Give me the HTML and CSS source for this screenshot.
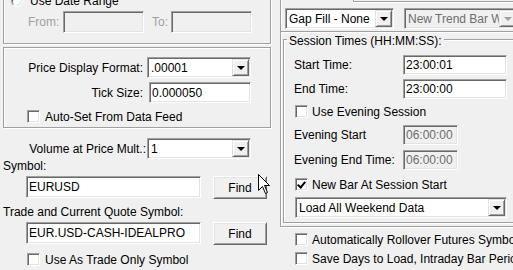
FILE: index.html
```html
<!DOCTYPE html>
<html lang="en">
<head>
    <meta charset="UTF-8">
    <meta name="viewport" content="width=device-width, initial-scale=1.0">
    <title>Chart Settings</title>
    <link rel="stylesheet" href="styles.css">
</head>
<body>
    <div class="dialog">
        <div class="col-left">
            <div class="group group-date">
                <label class="opt-row"><span class="radio"></span>Use Date Range</label>
                <div class="date-row">
                    <span class="dim lbl-from">From:</span>
                    <span class="field disabled date-field"></span>
                    <span class="dim lbl-to">To:</span>
                    <span class="field disabled date-field"></span>
                </div>
            </div>
            <div class="group group-price">
                <div class="form-row fmt-row">
                    <span class="row-label">Price Display Format:</span>
                    <span class="combo fmt-combo"><span class="combo-text">.00001</span><span class="combo-btn"></span></span>
                </div>
                <div class="form-row tick-row">
                    <span class="row-label">Tick Size:</span>
                    <span class="field tick-field">0.000050</span>
                </div>
                <label class="opt-row auto-row"><span class="check"></span>Auto-Set From Data Feed</label>
            </div>
            <div class="form-row vap-row">
                <span class="row-label">Volume at Price Mult.:</span>
                <span class="combo fmt-combo"><span class="combo-text">1</span><span class="combo-btn"></span></span>
            </div>
            <div class="caption symbol-caption">Symbol:</div>
            <div class="symbol-row">
                <span class="field symbol-field">EURUSD</span>
                <span class="button">Find</span>
            </div>
            <div class="caption trade-caption">Trade and Current Quote Symbol:</div>
            <div class="symbol-row">
                <span class="field symbol-field">EUR.USD-CASH-IDEALPRO</span>
                <span class="button">Find</span>
            </div>
            <label class="opt-row trade-only-row"><span class="check"></span>Use As Trade Only Symbol</label>
        </div>

        <div class="col-right">
            <div class="group group-chart">
                <div class="top-box"></div>
                <div class="gap-row">
                    <span class="combo gap-combo"><span class="combo-text">Gap Fill - None</span><span class="combo-btn"></span></span>
                    <span class="combo disabled trend-combo"><span class="combo-text">New Trend Bar When Exceeded</span><span class="combo-btn"></span></span>
                </div>
                <div class="separator"></div>
                <div class="group group-session">
                    <span class="legend">Session Times (HH:MM:SS):</span>
                    <div class="time-row start-row">
                        <span class="time-label">Start Time:</span>
                        <span class="field time-field">23:00:01</span>
                    </div>
                    <div class="time-row">
                        <span class="time-label">End Time:</span>
                        <span class="field time-field">23:00:00</span>
                    </div>
                    <label class="opt-row evening-row"><span class="check"></span>Use Evening Session</label>
                    <div class="time-row evening-start-row">
                        <span class="time-label">Evening Start</span>
                        <span class="field disabled short-field">06:00:00</span>
                    </div>
                    <div class="time-row evening-end-row">
                        <span class="time-label">Evening End Time:</span>
                        <span class="field disabled short-field">06:00:00</span>
                    </div>
                    <label class="opt-row newbar-row"><span class="check checked"></span>New Bar At Session Start</label>
                    <span class="combo weekend-combo"><span class="combo-text">Load All Weekend Data</span><span class="combo-btn"></span></span>
                </div>
            </div>
            <label class="opt-row rollover-row"><span class="check"></span>Automatically Rollover Futures Symbol</label>
            <label class="opt-row save-row"><span class="check"></span>Save Days to Load, Intraday Bar Period</label>
        </div>
    </div>

    <svg class="cursor" width="13" height="21" viewBox="0 0 13 21">
        <polygon points="0.5,0.5 0.5,16.5 4.5,12.5 7.5,19.5 9.5,18.5 6.5,11.5 11.5,11.5" fill="#fff" stroke="#000" stroke-width="1"/>
    </svg>
</body>
</html>
```

FILE: styles.css
```css
html, body {
    margin: 0;
    height: 100%;
    overflow: hidden;
    background: #f0f0f0;
}
body {
    font-family: "Liberation Sans", Arial, sans-serif;
    font-size: 12px;
    line-height: 14px;
    color: #000;
    position: relative;
}
.dialog {
    display: flex;
    margin-top: -14px;
}
.col-left {
    width: 268px;
    flex: none;
    padding-left: 3px;
}
.col-right {
    width: 260px;
    flex: none;
    margin-left: 9px;
}

/* group boxes - etched frame */
.group {
    border: 1px solid #a0a0a0;
    box-shadow: inset 1px 1px #fff, 1px 1px #fff;
}
.group-date {
    padding: 6px 0 10px 0;
}
.group-price {
    margin-top: 3px;
    padding: 9px 0 3px 0;
}

/* common controls */
.field, .combo {
    box-sizing: border-box;
    display: flex;
    align-items: center;
    background: #fff;
    border: 1px solid;
    border-color: #a0a0a0 #fff #fff #a0a0a0;
    box-shadow: inset 1px 1px #696969, inset -1px -1px #e3e3e3;
    white-space: nowrap;
    overflow: hidden;
}
.field {
    padding-left: 2px;
}
.field.disabled, .combo.disabled {
    background: #f0f0f0;
    color: #6d6d6d;
}
.combo-text {
    flex: 1;
    padding-left: 3px;
    overflow: hidden;
}
.combo-btn {
    flex: none;
    box-sizing: border-box;
    width: 17px;
    height: 17px;
    margin-right: 1px;
    background: #f0f0f0;
    border: 1px solid;
    border-color: #e3e3e3 #696969 #696969 #e3e3e3;
    box-shadow: inset 1px 1px #fff, inset -1px -1px #a0a0a0;
    display: flex;
    align-items: center;
    justify-content: center;
}
.combo-btn::after {
    content: "";
    border-left: 4px solid transparent;
    border-right: 4px solid transparent;
    border-top: 4px solid #000;
    margin-top: 1px;
}
.combo.disabled .combo-btn::after {
    border-top-color: #a0a0a0;
}
.button {
    box-sizing: border-box;
    display: flex;
    align-items: center;
    justify-content: center;
    width: 54px;
    height: 23px;
    background: #f0f0f0;
    border: 1px solid;
    border-color: #fff #696969 #696969 #fff;
    box-shadow: inset 1px 1px #e3e3e3, inset -1px -1px #a0a0a0;
}
.check {
    box-sizing: border-box;
    width: 13px;
    height: 13px;
    flex: none;
    background: #fff;
    border: 1px solid;
    border-color: #a0a0a0 #fff #fff #a0a0a0;
    box-shadow: inset 1px 1px #696969, inset -1px -1px #e3e3e3;
    position: relative;
}
.check.checked::after {
    content: "";
    position: absolute;
    left: 3px;
    top: 1px;
    width: 3px;
    height: 6px;
    border: solid #000;
    border-width: 0 2px 2px 0;
    transform: rotate(40deg);
}
.radio {
    box-sizing: border-box;
    width: 12px;
    height: 12px;
    flex: none;
    border-radius: 50%;
    background: #fff;
    border: 1px solid;
    border-color: #a0a0a0 #fff #fff #a0a0a0;
    box-shadow: inset 1px 1px #696969, inset -1px -1px #e3e3e3;
    margin: 0 7px 0 7px;
}
.opt-row {
    display: flex;
    align-items: center;
    height: 15px;
    white-space: nowrap;
}
.opt-row .check {
    margin-right: 5px;
}
.dim {
    color: #a0a0a0;
}

/* left column */
.date-row {
    display: flex;
    align-items: center;
    margin-top: 3px;
    padding-left: 24px;
}
.date-field {
    width: 81px;
    height: 22px;
}
.lbl-from {
    width: 35px;
}
.lbl-to {
    margin-left: 8px;
    width: 19px;
}
.form-row {
    display: flex;
    align-items: center;
}
.row-label {
    width: 139px;
    text-align: right;
    flex: none;
}
.fmt-combo {
    margin-left: 4px;
    width: 104px;
    height: 21px;
}
.tick-row {
    margin-top: 4px;
}
.tick-field {
    margin-left: 6px;
    width: 102px;
    height: 21px;
}
.auto-row {
    margin-top: 6px;
    padding-left: 23px;
}
.vap-row {
    margin-top: 10px;
}
.vap-row .row-label {
    width: 143px;
}
.vap-row .fmt-combo {
    margin-left: 1px;
}
.caption {
    height: 15px;
}
.trade-caption {
    margin-top: 6px;
}
.symbol-row {
    display: flex;
    align-items: flex-start;
    margin-top: 2px;
    padding-left: 23px;
}
.symbol-field {
    width: 175px;
    height: 22px;
}
.symbol-row .button {
    margin-left: 12px;
}
.trade-only-row {
    margin-top: 7px;
    padding-left: 24px;
}

/* right column */
.group-chart {
    padding: 0 0 3px 0;
    border-right: none;
}
.top-box {
    box-sizing: border-box;
    height: 15px;
    margin-left: 72px;
    border: 1px solid #a0a0a0;
    border-top: none;
    border-right: none;
    box-shadow: inset 1px 0 #fff, 0 1px #fff;
}
.gap-row {
    display: flex;
    padding: 6px 0 0 4px;
}
.gap-combo {
    width: 109px;
    height: 21px;
}
.trend-combo {
    margin-left: 10px;
    width: 114px;
    height: 21px;
}
.separator {
    margin-top: 2px;
    border-top: 1px solid #a0a0a0;
    border-bottom: 1px solid #fff;
}
.group-session {
    margin: 6px 0 0 2px;
    width: 240px;
    padding: 0 0 4px 0;
}
.legend {
    display: block;
    width: max-content;
    margin: -6px 0 0 3px;
    padding: 0 2px;
    background: #f0f0f0;
}
.time-row {
    display: flex;
    align-items: center;
    margin-top: 4px;
    padding-left: 10px;
}
.start-row {
    margin-top: 7px;
}
.time-label {
    width: 109px;
    flex: none;
}
.time-field {
    width: 104px;
    height: 20px;
}
.short-field {
    width: 55px;
    height: 20px;
}
.evening-row {
    margin-top: 5px;
    padding-left: 11px;
}
.evening-row .check, .newbar-row .check {
    margin-right: 4px;
}
.evening-start-row {
    margin-top: 6px;
}
.evening-end-row {
    margin-top: 5px;
}
.newbar-row {
    margin-top: 7px;
    padding-left: 11px;
}
.weekend-combo {
    margin: 5px 0 0 11px;
    width: 212px;
    height: 21px;
}
.rollover-row {
    margin-top: 5px;
    padding-left: 15px;
}
.save-row {
    margin-top: 4px;
    padding-left: 15px;
}
.rollover-row .check, .save-row .check {
    margin-right: 4px;
}

/* pointer drawn over the Find button */
.cursor {
    position: absolute;
    left: 258px;
    top: 174px;
}
```
